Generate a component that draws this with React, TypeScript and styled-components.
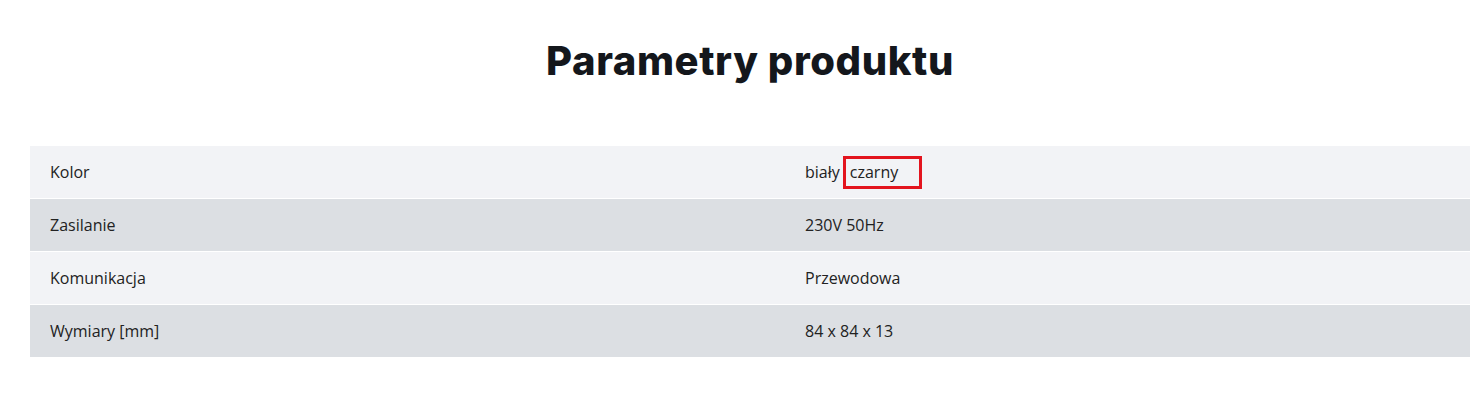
import React from "react";
import styled, { createGlobalStyle } from "styled-components";

const GlobalStyle = createGlobalStyle`
  body {
    margin: 0;
    background: #fff;
    font-family: "Open Sans", "Noto Sans", sans-serif;
  }
`;

const Section = styled.section`
  padding: 30px 14px 0 30px;
`;

const Title = styled.h2`
  margin: 0 0 54px;
  text-align: center;
  font-family: Inter, "Noto Sans", sans-serif;
  font-size: 40px;
  font-weight: 800;
  line-height: 62px;
  letter-spacing: 0.6px;
  color: #14171c;
`;

const Table = styled.table`
  width: 100%;
  border-collapse: collapse;
  font-size: 16px;
  color: #222;
`;

const Row = styled.tr<{ $dark: boolean }>`
  background: ${({ $dark }) => ($dark ? "#dcdfe3" : "#f2f3f6")};
  border-bottom: 1px solid #fff;
`;

const Cell = styled.td`
  height: 52px;
  padding: 0 20px;
  vertical-align: middle;
  line-height: 22px;
`;

const NameCell = styled(Cell)`
  width: 715px;
`;

const Option = styled.span<{ $selected?: boolean }>`
  display: inline-block;
  box-sizing: border-box;
  vertical-align: middle;
  ${({ $selected }) =>
    $selected
      ? `
    width: 79px;
    height: 33px;
    margin-left: 3px;
    padding: 2px 4px;
    border: 3px solid #e3141e;
  `
      : ""}
`;

const params = [
  { name: "Kolor", value: null },
  { name: "Zasilanie", value: "230V 50Hz" },
  { name: "Komunikacja", value: "Przewodowa" },
  { name: "Wymiary [mm]", value: "84 x 84 x 13" },
];

export default function App() {
  return (
    <>
      <GlobalStyle />
      <Section>
        <Title>Parametry produktu</Title>
        <Table>
          <tbody>
            {params.map((p, i) => (
              <Row key={p.name} $dark={i % 2 === 1}>
                <NameCell>{p.name}</NameCell>
                <Cell>
                  {p.value ?? (
                    <>
                      <Option>biały</Option>
                      <Option $selected>czarny</Option>
                    </>
                  )}
                </Cell>
              </Row>
            ))}
          </tbody>
        </Table>
      </Section>
    </>
  );
}
